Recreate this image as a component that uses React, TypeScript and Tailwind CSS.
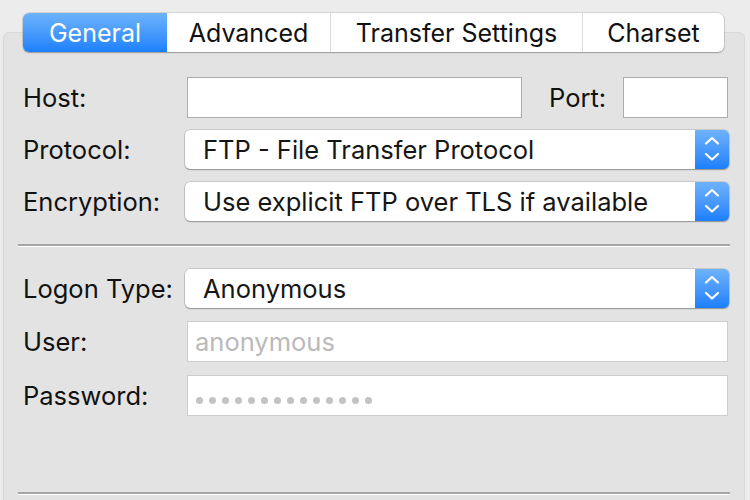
import React from "react";

const font = { fontFamily: "Inter, 'Liberation Sans', Arial, sans-serif" };

function Chevrons() {
  return (
    <svg width="34" height="39" viewBox="0 0 34 39" fill="none">
      <polyline points="11,13.5 17,8 23,13.5" stroke="white" strokeWidth="2.2" strokeLinecap="round" strokeLinejoin="round" />
      <polyline points="11,24 17,29.5 23,24" stroke="white" strokeWidth="2.2" strokeLinecap="round" strokeLinejoin="round" />
    </svg>
  );
}

function Select({ value }: { value: string }) {
  return (
    <div className="flex h-[39px] w-[544px] overflow-hidden rounded-[5px] bg-white shadow-[0_0_0_0.5px_rgba(0,0,0,0.22),0_1px_1.5px_rgba(0,0,0,0.28)]">
      <div className="flex flex-1 items-center pl-[18px] pt-[1px] text-[25.5px] leading-[30px] text-[#161616]">{value}</div>
      <div className="flex w-[34px] items-center justify-center bg-gradient-to-b from-[#6eb2fb] to-[#1a7ffb]">
        <Chevrons />
      </div>
    </div>
  );
}

function Label({ text, w }: { text: string; w: string }) {
  return <div className={`${w} shrink-0 pt-[1px] text-[25.5px] leading-[30px] text-[#111]`}>{text}</div>;
}

function Separator() {
  return (
    <div className="-ml-[5px] w-[712px]">
      <div className="h-[2px] bg-[#a6a6a6]" />
      <div className="h-[1px] bg-white" />
    </div>
  );
}

export default function App() {
  const tabs = [
    { name: "General", w: "w-[144px]" },
    { name: "Advanced", w: "w-[163px]" },
    { name: "Transfer Settings", w: "w-[252px]" },
    { name: "Charset", w: "w-[142px]" },
  ];
  return (
    <div className="h-[500px] w-[750px] overflow-hidden bg-[#ececec]" style={font}>
      <div className="ml-[3px] mr-[5px] mt-[32px] h-[480px] rounded-t-[6px] border border-[#d8d8d8] bg-[#e3e3e3] pl-[19px]">
        <div className="-mt-[20px] flex h-[39px] w-[701px] overflow-hidden rounded-[6px] bg-white shadow-[0_0_0_0.5px_rgba(0,0,0,0.2),0_1px_1.5px_rgba(0,0,0,0.25)]">
          {tabs.map((t, i) => (
            <div
              key={t.name}
              className={
                i === 0
                  ? `${t.w} flex items-center justify-center bg-gradient-to-b from-[#6db3fb] to-[#1a80fb] pt-[1px] text-[25px] leading-[30px] text-white`
                  : `${t.w} flex items-center justify-center pt-[1px] text-[25px] leading-[30px] text-[#111] ${i > 1 ? "border-l border-[#dcdcdc]" : ""}`
              }
            >
              {t.name}
            </div>
          ))}
        </div>

        <div className="mt-[25px] flex h-[41px] items-center">
          <Label text="Host:" w="w-[164px]" />
          <div className="h-[41px] w-[335px] border border-[#acacac] bg-white" />
          <div className="ml-[27px] w-[74px] pt-[1px] text-[25.5px] leading-[30px] text-[#111]">Port:</div>
          <div className="h-[41px] w-[105px] border border-[#acacac] bg-white" />
        </div>

        <div className="mt-[12px] flex h-[39px] items-center">
          <Label text="Protocol:" w="w-[162px]" />
          <Select value="FTP - File Transfer Protocol" />
        </div>

        <div className="mt-[13px] flex h-[39px] items-center">
          <Label text="Encryption:" w="w-[162px]" />
          <Select value="Use explicit FTP over TLS if available" />
        </div>

        <div className="mt-[23px]">
          <Separator />
        </div>

        <div className="mt-[22px] flex h-[39px] items-center">
          <Label text="Logon Type:" w="w-[162px]" />
          <Select value="Anonymous" />
        </div>

        <div className="mt-[13px] flex h-[41px] items-center">
          <Label text="User:" w="w-[164px]" />
          <div className="flex h-[41px] w-[541px] items-center border border-[#cdcdcd] bg-white pl-[7px] pt-[1px] text-[25.5px] leading-[30px] text-[#bababa]">
            anonymous
          </div>
        </div>

        <div className="mt-[13px] flex h-[41px] items-center">
          <Label text="Password:" w="w-[164px]" />
          <div className="flex h-[41px] w-[541px] items-center gap-[6px] border border-[#cdcdcd] bg-white pl-[8px] pt-[9px]">
            {Array.from({ length: 14 }).map((_, i) => (
              <span key={i} className="h-[7px] w-[7px] rounded-full bg-[#c3c3c3]" />
            ))}
          </div>
        </div>

        <div className="mt-[76px]">
          <Separator />
        </div>
      </div>
    </div>
  );
}
